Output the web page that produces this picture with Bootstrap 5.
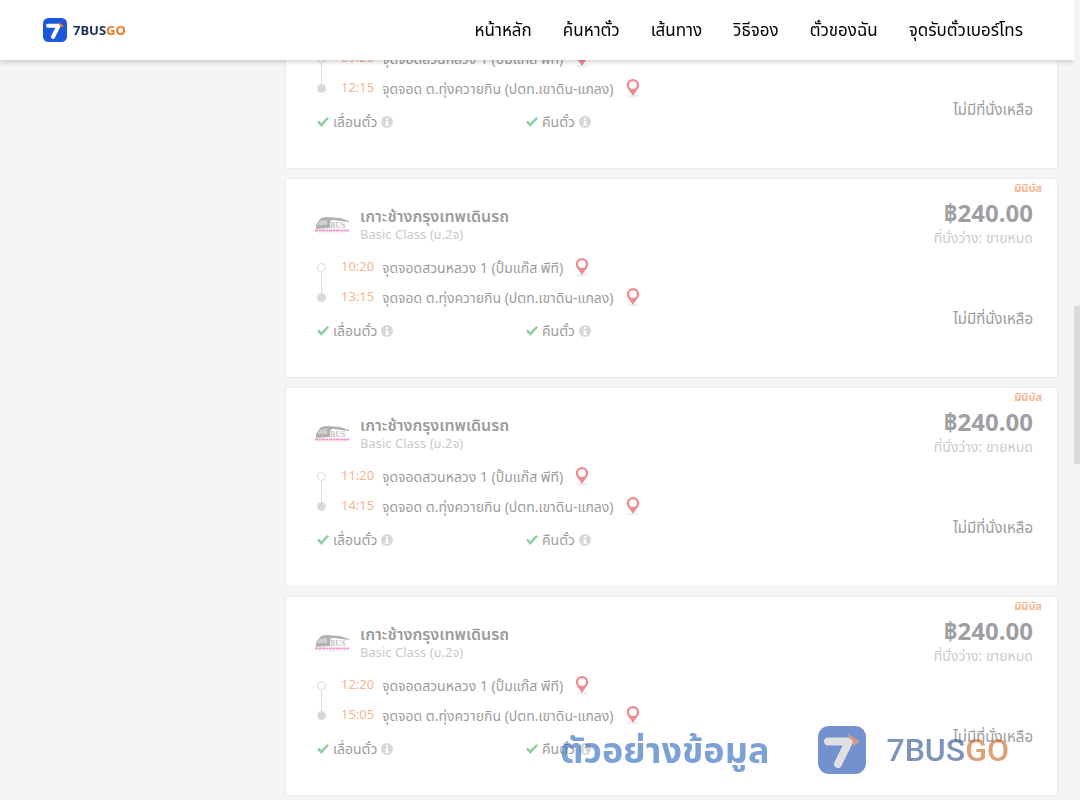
<!DOCTYPE html>
<html lang="th"><head><meta charset="utf-8"><meta name="viewport" content="width=device-width, initial-scale=1"><title>7BUSGO</title>
<link href="https://cdn.jsdelivr.net/npm/bootstrap@5.3.0/dist/css/bootstrap.min.css" rel="stylesheet">
<style>
body{font-family:"Noto Sans","Noto Sans Thai",sans-serif;background:#f5f5f5;color:#000;font-size:13px}
.topbar{height:60px;margin-right:6px;padding:0 51px 0 43px;background:#fff;box-shadow:0 2px 5px rgba(0,0,0,.18)}
.topbar .nav-link{color:#000;padding:0;font-size:17px;line-height:24px}
.menu-list{gap:31px}
.brand-name{font:700 13px/24px "Noto Sans",sans-serif;color:#17305c;margin-left:6px}
.brand-go{color:#f0781e}
.results{height:100vh;overflow:hidden;padding-right:22px}
.filters{width:285px}
.trips{gap:9px;margin-top:-31px}
.trip{height:200px;border:1px solid #ececec;border-radius:1px;padding:0 24px 0 29px}
.trip>*{opacity:.45}
.trip-info{padding-top:28px}
.op-name{font-size:16px;line-height:18px;font-weight:600;color:#222;margin:0}
.op-class{font-size:13px;line-height:18px;color:#888}
.op-text{margin-left:10px}
.stops{margin-top:9px}
.stop{height:30px;color:#222;font-size:14px}
.stop time{color:#ee5a00;width:41px;font-size:13px}
.stop svg{margin-left:12px}
.dot{width:9px;height:9px;border:1px solid #b4b4b4;border-radius:50%;margin-right:15px;margin-left:2px;position:relative;background:#fff}
.dot.end{background:#aaa}
.dot.end::before{content:"";position:absolute;left:3px;bottom:8px;height:21px;border-left:1px solid #bbb}
.perks{margin-top:8px;padding-left:2px;line-height:22px;color:#222;font-size:14px}
.perks>span{width:209px}
.kind{font-size:11px;line-height:14px;font-weight:700;color:#ee5a00;margin:2px -9px 3px 0}
.price{font-size:24px;line-height:30px;font-weight:700;color:#2b2d32}
.seats{line-height:20px;color:#8a8a8a;font-size:14px}
.soldout{line-height:20px;margin-top:60px;color:#222;font-size:15px}
.sample{right:71px;bottom:24px;opacity:.6;z-index:5;pointer-events:none}
.sample svg{filter:brightness(.8)}
.sample-text{font:700 36px/52px "Noto Sans","Noto Sans Thai",sans-serif;color:#2463bb;margin-right:49px}
.sample-name{font:500 32px/52px Roboto,sans-serif;color:#254b8d;margin-left:20px}
.sample-name span{color:#c95f19}
.track{top:0;right:0;width:6px;height:100vh;padding-top:306px;background:#f5f5f5;z-index:1040}
.thumb{height:158px;background:#dcdcdc}
</style></head><body>
<svg class="d-none">
<symbol id="seven" viewBox="0 0 48 48"><rect width="48" height="48" rx="11" fill="#1d57dc"/><path d="M10 15.500H31L20 38" fill="none" stroke="#fff" stroke-width="8" stroke-linecap="round" stroke-linejoin="round"/><path d="M30 8L42 15.500L35 20Q36 14 31 12Z" fill="#f0722a"/></symbol>
<symbol id="pin" viewBox="0 0 14 19"><ellipse cx="7" cy="17" rx="6" ry="1.500" fill="#ddd"/><path fill="#d9000d" fill-rule="evenodd" d="M7 0a6.200 6.200 0 0 0-6.200 6.200C.8 9.500 4.500 12.500 7 17c2.500-4.500 6.200-7.500 6.200-10.800A6.200 6.200 0 0 0 7 0Zm0 2.200a3.900 3.900 0 1 1 0 7.800 3.900 3.900 0 0 1 0-7.800Z"/></symbol>
<symbol id="check" viewBox="0 0 12 10"><path d="M0 5.300L1.800 3.600 4.200 6 10.200 0 12 1.500 4.300 10Z" fill="#0a9c30"/></symbol>
<symbol id="info" viewBox="0 0 12 12"><circle cx="6" cy="6" r="6" fill="#aaa"/><path d="M5 2h2v2H5ZM4.500 5H7v3.500h.8V10H4.300V8.500H5v-2h-.5Z" fill="#fff"/></symbol>
<symbol id="bus" viewBox="0 0 35 18"><path d="M1 13V9L5 3Q7 1 12 1L25 2L34 5V6L18 4Q15 4 15 7V12Z" fill="#555"/><path d="M5 5L12 4V9H2Z" fill="#999"/><text x="15" y="12" font-family="Liberation Serif" font-size="8" font-weight="700" fill="#777">BUS</text><path d="M0 14.500H34" stroke="#e0218a" stroke-width="2" stroke-dasharray="3 .5"/><path d="M3 17H31" stroke="#ccc" stroke-width=".7"/></symbol>
</svg>
<header class="topbar fixed-top d-flex align-items-center justify-content-between">
<a href="#" class="d-flex align-items-center text-decoration-none"><svg width="24" height="24"><use href="#seven"/></svg><span class="brand-name">7BUS<span class="brand-go">GO</span></span></a>
<nav class="menu-list d-flex"><a class="nav-link" href="#">หน้าหลัก</a><a class="nav-link" href="#">ค้นหาตั๋ว</a><a class="nav-link" href="#">เส้นทาง</a><a class="nav-link" href="#">วิธีจอง</a><a class="nav-link" href="#">ตั๋วของฉัน</a><a class="nav-link" href="#">จุดรับตั๋วเบอร์โทร</a></nav>
</header>
<main class="results d-flex"><aside class="filters flex-shrink-0"></aside><section class="trips d-flex flex-column flex-grow-1" id="trips"></section></main>
<div class="sample position-fixed d-flex align-items-center"><span class="sample-text">ตัวอย่างข้อมูล</span><svg width="48" height="48"><use href="#seven"/></svg><span class="sample-name">7BUS<span>GO</span></span></div>
<div class="track position-fixed"><div class="thumb"></div></div>
<script>
const pin='<svg width="14" height="19"><use href="#pin"/></svg>';
const perk=t=>`<span class="d-flex align-items-center"><svg class="me-1" width="12" height="10"><use href="#check"/></svg>${t}<svg class="ms-1" width="12" height="12"><use href="#info"/></svg></span>`;
document.getElementById('trips').innerHTML=[['09:20','12:15'],['10:20','13:15'],['11:20','14:15'],['12:20','15:05']].map(([a,b])=>`
<article class="trip bg-white d-flex justify-content-between flex-shrink-0">
<div class="trip-info"><div class="d-flex align-items-center"><svg width="35" height="18"><use href="#bus"/></svg><div class="op-text"><h2 class="op-name">เกาะช้างกรุงเทพเดินรถ</h2><div class="op-class">Basic Class (ม.2จ)</div></div></div>
<div class="stops"><div class="stop d-flex align-items-center"><i class="dot"></i><time>${a}</time>จุดจอดสวนหลวง 1 (ปั้มแก๊ส พีที)${pin}</div>
<div class="stop d-flex align-items-center"><i class="dot end"></i><time>${b}</time>จุดจอด ต.ทุ่งควายกิน (ปตท.เขาดิน-แกลง)${pin}</div></div>
<div class="perks d-flex">${perk('เลื่อนตั๋ว')}${perk('คืนตั๋ว')}</div></div>
<div class="text-end"><div class="kind">มินิบัส</div><div class="price">฿240.00</div><div class="seats">ที่นั่งว่าง: ขายหมด</div><div class="soldout">ไม่มีที่นั่งเหลือ</div></div>
</article>`).join('');
</script>
<script src="https://cdn.jsdelivr.net/npm/bootstrap@5.3.0/dist/js/bootstrap.bundle.min.js"></script>
</body></html>
